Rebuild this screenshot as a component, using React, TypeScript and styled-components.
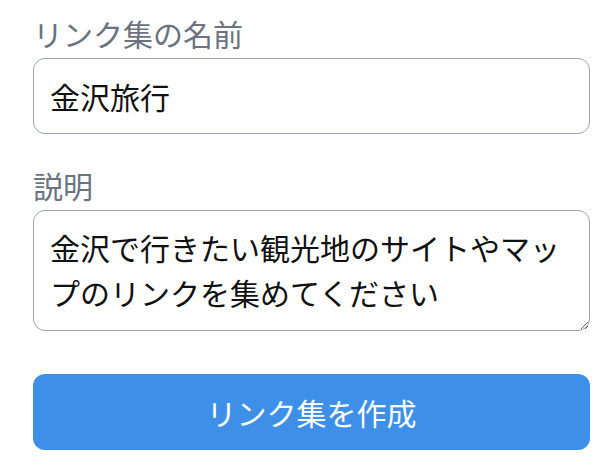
import React, { useState } from "react";
import styled, { createGlobalStyle } from "styled-components";

const GlobalStyle = createGlobalStyle`
  html, body {
    margin: 0;
    padding: 0;
    background: #ffffff;
  }
  body {
    font-family: "Noto Sans CJK JP", "Noto Sans", sans-serif;
  }
`;

/* layout */

const Form = styled.form`
  width: 557px;
  margin-left: 33px;
  padding-top: 11px;
  display: flex;
  flex-direction: column;
`;

const Field = styled.div`
  display: flex;
  flex-direction: column;
  margin-bottom: 29px;
`;

const Label = styled.label`
  font-size: 30px;
  line-height: 45px;
  margin-bottom: 2px;
  color: #6b7280;
`;

const TextInput = styled.input`
  box-sizing: border-box;
  width: 100%;
  height: 76px;
  padding: 0 16px;
  font-family: inherit;
  font-size: 30px;
  color: #111111;
  border: 1px solid #9ca3af;
  border-radius: 12px;
  outline: none;
`;

const TextArea = styled.textarea`
  box-sizing: border-box;
  width: 100%;
  height: 121px;
  padding: 14px 16px;
  font-family: inherit;
  font-size: 30px;
  line-height: 45px;
  color: #111111;
  border: 1px solid #9ca3af;
  border-radius: 12px;
  outline: none;
  resize: vertical;
  overflow: hidden;
`;

const SubmitButton = styled.button`
  margin-top: 14px;
  height: 76px;
  width: 100%;
  border: none;
  border-radius: 12px;
  background-color: #3e8fe8;
  color: #ffffff;
  font-family: inherit;
  font-size: 30px;
  cursor: pointer;
`;

const App: React.FC = () => {
  const [name, setName] = useState("金沢旅行");
  const [description, setDescription] = useState(
    "金沢で行きたい観光地のサイトやマップのリンクを集めてください"
  );

  return (
    <>
      <GlobalStyle />
      <Form onSubmit={(e) => e.preventDefault()}>
        <Field>
          <Label htmlFor="name">リンク集の名前</Label>
          <TextInput id="name" value={name} onChange={(e) => setName(e.target.value)} />
        </Field>
        <Field>
          <Label htmlFor="description">説明</Label>
          <TextArea
            id="description"
            value={description}
            onChange={(e) => setDescription(e.target.value)}
          />
        </Field>
        <SubmitButton type="submit">リンク集を作成</SubmitButton>
      </Form>
    </>
  );
};

export default App;
